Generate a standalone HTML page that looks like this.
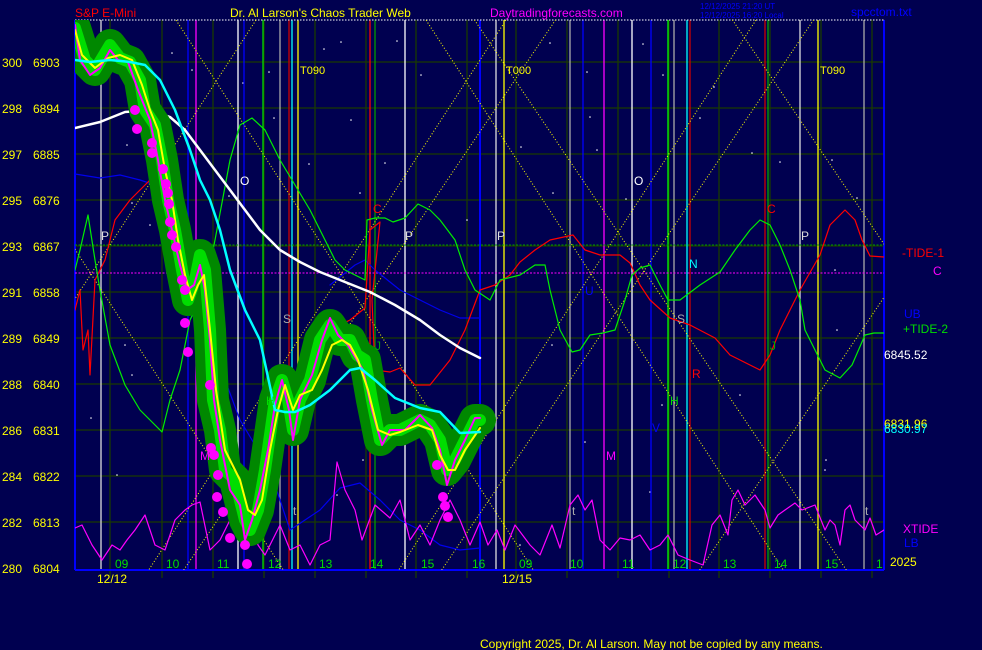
<!DOCTYPE html><html><head><style>body{margin:0;background:#000050;}svg{display:block;font-family:"Liberation Sans",sans-serif;}</style></head><body>
<svg width="982" height="650" viewBox="0 0 982 650" xmlns="http://www.w3.org/2000/svg">
<rect width="982" height="650" fill="#000050"/>
<defs><clipPath id="pa"><rect x="75" y="20" width="809" height="550"/></clipPath></defs>
<g stroke="#1a3a00" stroke-width="1.3" fill="none">
<path d="M75 62H884M75 108H884M75 154H884M75 200H884M75 246H884M75 292H884M75 338H884M75 384H884M75 430H884M75 476H884M75 522H884"/>
<path d="M110 20V578M162 20V578M213 20V578M264 20V578M315 20V578M366 20V578M416 20V578M467 20V578M516 20V578M567 20V578M618 20V578M669 20V578M719 20V578M770 20V578M821 20V578M872 20V578"/>
</g>
<g fill="#fff">
<circle cx="172" cy="53" r=".8"/><circle cx="192" cy="70" r=".8"/><circle cx="243" cy="83" r=".8"/><circle cx="269" cy="72" r=".8"/><circle cx="341" cy="42" r=".8"/><circle cx="324" cy="49" r=".8"/><circle cx="274" cy="118" r=".8"/><circle cx="351" cy="120" r=".8"/><circle cx="127" cy="145" r=".8"/><circle cx="309" cy="164" r=".8"/><circle cx="385" cy="163" r=".8"/><circle cx="229" cy="196" r=".8"/><circle cx="360" cy="193" r=".8"/><circle cx="132" cy="203" r=".8"/><circle cx="467" cy="220" r=".8"/><circle cx="150" cy="225" r=".8"/><circle cx="397" cy="41" r=".8"/><circle cx="421" cy="75" r=".8"/><circle cx="550" cy="43" r=".8"/><circle cx="587" cy="72" r=".8"/><circle cx="643" cy="44" r=".8"/><circle cx="663" cy="75" r=".8"/><circle cx="714" cy="87" r=".8"/><circle cx="590" cy="117" r=".8"/><circle cx="700" cy="118" r=".8"/><circle cx="521" cy="147" r=".8"/><circle cx="597" cy="150" r=".8"/><circle cx="752" cy="153" r=".8"/><circle cx="553" cy="193" r=".8"/><circle cx="626" cy="199" r=".8"/><circle cx="780" cy="162" r=".8"/><circle cx="832" cy="160" r=".8"/><circle cx="857" cy="198" r=".8"/><circle cx="835" cy="270" r=".8"/><circle cx="552" cy="345" r=".8"/><circle cx="585" cy="442" r=".8"/><circle cx="662" cy="405" r=".8"/><circle cx="740" cy="395" r=".8"/><circle cx="826" cy="460" r=".8"/><circle cx="837" cy="330" r=".8"/><circle cx="125" cy="345" r=".8"/><circle cx="132" cy="375" r=".8"/><circle cx="91" cy="418" r=".8"/><circle cx="117" cy="475" r=".8"/><circle cx="337" cy="495" r=".8"/><circle cx="363" cy="460" r=".8"/><circle cx="410" cy="430" r=".8"/><circle cx="650" cy="492" r=".8"/><circle cx="520" cy="545" r=".8"/><circle cx="825" cy="470" r=".8"/></g>
<g stroke-width="1.3" fill="none">
<path d="M101 20V570" stroke="#ddd"/><path d="M188 20V570" stroke="#0000ff"/><path d="M196 20V570" stroke="#ff00ff"/><path d="M238 20V570" stroke="#fff"/><path d="M244 20V570" stroke="#0000ff"/><path d="M263 20V570" stroke="#00dd00"/><path d="M280 20V570" stroke="#aaa"/><path d="M289 20V570" stroke="#c00"/><path d="M292 20V570" stroke="#00ffff"/><path d="M298 20V570" stroke="#ffff00"/><path d="M370 20V570" stroke="#ff0000"/><path d="M375 20V570" stroke="#009900"/><path d="M405 20V570" stroke="#fff"/>
<path d="M496 20V570" stroke="#ddd"/><path d="M504 20V570" stroke="#ffff00"/><path d="M570 20V570" stroke="#aaa"/><path d="M583 20V570" stroke="#0000ff"/><path d="M604 20V570" stroke="#ff00ff"/><path d="M632 20V570" stroke="#fff"/><path d="M651 20V570" stroke="#0000ff"/><path d="M668 20V570" stroke="#00ff00"/><path d="M674 20V570" stroke="#aaa"/><path d="M687 20V570" stroke="#00ffff"/><path d="M690 20V570" stroke="#c00"/><path d="M765 20V570" stroke="#c00"/><path d="M768 20V570" stroke="#00aa00"/><path d="M800 20V570" stroke="#ddd"/><path d="M818 20V570" stroke="#ffff00"/><path d="M864 20V570" stroke="#aaa"/>
</g>
<path d="M75 20V570M480 20V570M884 20V570" stroke="#0000ff" stroke-width="2"/>
<path d="M75 20H884" stroke="#fff" stroke-width="1" stroke-dasharray="1.5 1.5"/>
<path d="M75 570H884" stroke="#0000ff" stroke-width="2"/>
<path d="M75 245H884" stroke="#00a000" stroke-width="1" stroke-dasharray="2 1.5"/>
<path d="M75 273H884" stroke="#ff00ff" stroke-width="1" stroke-dasharray="2 1.5"/>
<g clip-path="url(#pa)" stroke="#ffff00" stroke-width="1" stroke-dasharray="1 2" fill="none">
<path d="M163 0L558 608M413 0L808 608M-87 0L308 608M269 0L-126 608M519 0L124 608M769 0L374 608"/>
<path d="M461 0L872 608M719 0L1130 608M977 0L1388 608M569 0L158 608M827 0L416 608M1085 0L674 608"/>
</g>
<g clip-path="url(#pa)" fill="none" stroke-linejoin="round" stroke-linecap="round">
<path d="M75 174L100 178L120 175L140 180L155 185L170 200L180 260L195 290L210 330L225 380L240 420L252 440L270 470L290 530L320 510L340 488L360 483L380 500L400 520L420 530L440 545L460 550L480 548" stroke="#0000ee" stroke-width="1.2"/>
<path d="M330 285L355 265L365 260L375 270L400 290L440 310L460 318L480 318" stroke="#0000ee" stroke-width="1.2"/>
<path d="M75 310L80 290L83 350L88 330L90 375L95 280L105 260L115 220L130 200L150 180L163 160L170 190L180 240L195 280L210 320L225 420L240 470L253 472L280 420L300 380L330 330L350 320L365 308L370 230L380 222L372 300L375 370L390 372L400 368L415 385L430 385L450 360L465 330L480 290L495 285L510 275L520 262L535 250L550 240L573 235L585 250L600 255L620 255L630 263L640 285L650 300L670 318L690 325L715 338L730 355L750 365L760 370L770 355L780 330L800 290L820 255L830 225L845 210L855 220L862 240L870 256L884 257" stroke="#ff0000" stroke-width="1.2"/>
<path d="M75 270L80 250L88 215L95 260L100 290L110 345L125 385L140 410L155 425L162 432L170 400L180 370L190 320L205 290L215 240L230 160L240 125L252 118L265 130L280 160L295 185L310 210L325 240L335 260L345 270L365 280L367 220L375 218L385 218L393 222L405 218L418 204L430 210L440 220L455 240L465 270L475 290L490 300L500 280L520 275L535 265L545 265L550 290L560 330L572 352L580 350L590 335L603 333L615 330L625 300L632 275L640 268L650 265L660 285L668 300L680 300L700 285L720 272L735 250L750 230L760 220L770 225L780 245L790 270L800 300L805 330L815 350L825 370L840 378L852 365L865 335L874 333L884 333" stroke="#00ee00" stroke-width="1.2"/>
<path d="M75 528L82 525L92 545L102 560L112 545L120 550L127 540L135 530L145 515L155 545L165 550L175 520L185 510L192 505L200 502L210 550L220 540L235 510L245 500L258 545L265 555L280 525L290 550L300 545L310 565L320 545L330 540L337 462L345 490L355 510L362 540L375 505L390 518L400 500L410 540L420 525L430 545L440 520L450 500L460 520L470 545L480 522L488 545L497 530L505 550L515 525L530 545L540 555L552 525L560 548L570 505L578 495L585 510L592 500L600 540L610 550L620 538L630 540L640 535L650 550L660 545L668 535L678 555L690 560L703 565L712 525L720 515L728 535L732 500L738 490L745 505L755 495L765 510L770 528L778 515L785 510L795 503L802 510L815 505L825 530L830 520L835 525L840 545L845 510L850 505L855 520L865 530L870 518L876 535L884 530" stroke="#ff00ff" stroke-width="1.2"/>
<path d="M75 128L100 122L125 112L150 110L170 117L185 130L200 150L215 170L230 190L245 210L260 230L280 250L300 262L320 272L345 282L370 292L395 305L420 320L440 335L460 348L480 358" stroke="#fff" stroke-width="2.5"/>
<path d="M75 28L85 60L95 70L110 45L120 58L130 62L140 80L145 110L155 125L162 160L168 200L175 230L182 270L188 300L195 280L200 255L205 270L210 330L213 400L220 430L225 470L235 480L245 520L250 530L258 510L265 470L275 400L282 380L288 400L293 430L300 400L310 380L320 340L330 325L340 340L350 340L357 355L365 360L372 400L380 440L390 430L400 430L410 425L420 420L430 425L440 440L447 470L455 460L465 440L475 420L480 420" stroke="#008800" stroke-width="32"/>
<path d="M75 28L85 60L95 70L110 45L120 58L130 62L140 80L145 110L155 125L162 160L168 200L175 230L182 270L188 300L195 280L200 255L205 270L210 330L213 400L220 430L225 470L235 480L245 520L250 530L258 510L265 470L275 400L282 380L288 400L293 430L300 400L310 380L320 340L330 325L340 340L350 340L357 355L365 360L372 400L380 440L390 430L400 430L410 425L420 420L430 425L440 440L447 470L455 460L465 440L475 420L480 420" stroke="#00dd00" stroke-width="12"/>
<path d="M75 25L80 60L90 75L100 68L110 50L118 60L128 62L138 90L142 100L150 120L158 160L165 200L172 230L180 265L187 290L194 285L200 265L205 290L210 340L214 400L220 440L230 490L240 505L245 540L252 520L260 490L268 450L275 405L282 380L289 410L293 440L300 400L312 375L322 340L330 318L338 335L348 345L357 360L363 370L372 410L382 445L390 430L405 430L420 415L432 428L440 450L447 485L455 460L465 440L475 418L480 418" stroke="#ff00ff" stroke-width="2"/>
<path d="M75 30L82 55L95 68L108 58L120 55L132 60L142 85L150 110L158 130L165 170L172 200L178 240L185 275L192 300L198 285L204 275L210 330L216 390L225 450L240 480L248 510L255 515L262 500L270 450L278 410L285 385L293 410L300 395L312 390L322 370L332 345L342 340L350 345L358 360L368 390L378 430L390 435L400 432L418 425L432 430L440 455L448 470L455 470L465 450L480 428" stroke="#ffff00" stroke-width="2"/>
<path d="M75 60L90 62L110 60L130 62L145 65L160 80L175 110L190 150L200 180L210 200L220 230L230 270L245 310L260 340L275 410L285 412L295 412L310 405L330 390L350 370L360 368L375 380L395 398L420 408L440 412L460 433L480 432" stroke="#00ffff" stroke-width="2.5"/>
</g>
<g fill="#ff00ff">
<circle cx="135" cy="110" r="5"/><circle cx="137" cy="129" r="5"/><circle cx="152" cy="143" r="5"/><circle cx="152" cy="153" r="5"/><circle cx="163" cy="169" r="5"/><circle cx="166" cy="184" r="5"/><circle cx="168" cy="193" r="5"/><circle cx="169" cy="204" r="5"/><circle cx="170" cy="222" r="5"/><circle cx="172" cy="235" r="5"/><circle cx="176" cy="247" r="5"/><circle cx="182" cy="280" r="5"/><circle cx="185" cy="290" r="5"/><circle cx="185" cy="323" r="5"/><circle cx="188" cy="352" r="5"/><circle cx="210" cy="385" r="5"/><circle cx="211" cy="448" r="5"/><circle cx="214" cy="455" r="5"/><circle cx="218" cy="475" r="5"/><circle cx="217" cy="497" r="5"/><circle cx="223" cy="512" r="5"/><circle cx="230" cy="538" r="5"/><circle cx="245" cy="545" r="5"/><circle cx="247" cy="564" r="5"/><circle cx="437" cy="465" r="5"/><circle cx="443" cy="497" r="5"/><circle cx="445" cy="506" r="5"/><circle cx="448" cy="517" r="5"/></g>
<g font-size="12" fill="#ffff00">
<text x="2" y="67">300</text><text x="33" y="67">6903</text><text x="2" y="113">298</text><text x="33" y="113">6894</text><text x="2" y="159">297</text><text x="33" y="159">6885</text><text x="2" y="205">295</text><text x="33" y="205">6876</text><text x="2" y="251">293</text><text x="33" y="251">6867</text><text x="2" y="297">291</text><text x="33" y="297">6858</text><text x="2" y="343">289</text><text x="33" y="343">6849</text><text x="2" y="389">288</text><text x="33" y="389">6840</text><text x="2" y="435">286</text><text x="33" y="435">6831</text><text x="2" y="481">284</text><text x="33" y="481">6822</text><text x="2" y="527">282</text><text x="33" y="527">6813</text><text x="2" y="573">280</text><text x="33" y="573">6804</text>
<text x="97" y="583">12/12</text><text x="502" y="583">12/15</text>
<text x="230" y="17">Dr. Al Larson's Chaos Trader Web</text>
<text x="480" y="648">Copyright 2025, Dr. Al Larson. May not be copied by any means.</text>
<text x="890" y="566">2025</text><text x="884" y="428">6831.96</text>
<text x="300" y="74" font-size="11">T090</text><text x="506" y="74" font-size="11">T000</text><text x="820" y="74" font-size="11">T090</text>
</g>
<g font-size="12" fill="#00dd00"><text x="115" y="568">09</text><text x="166" y="568">10</text><text x="217" y="568">11</text><text x="268" y="568">12</text><text x="319" y="568">13</text><text x="370" y="568">14</text><text x="421" y="568">15</text><text x="472" y="568">16</text><text x="519" y="568">09</text><text x="570" y="568">10</text><text x="622" y="568">11</text><text x="673" y="568">12</text><text x="723" y="568">13</text><text x="774" y="568">14</text><text x="825" y="568">15</text><text x="876" y="568">1</text>
<text x="903" y="333">+TIDE-2</text></g>
<text x="75" y="17" font-size="12" fill="#ff0000">S&amp;P E-Mini</text>
<text x="490" y="17" font-size="12" fill="#ff00ff">Daytradingforecasts.com</text>
<text x="700" y="9" font-size="8" fill="#0000ff">12/12/2025 21:20 UT</text>
<text x="700" y="18" font-size="8" fill="#0000ff">12/12/2025 16:20 Local</text>
<text x="851" y="16" font-size="12" fill="#0000ff">spcctom.txt</text>
<text x="902" y="257" font-size="12" fill="#ff0000">-TIDE-1</text>
<text x="933" y="275" font-size="12" fill="#ff00ff">C</text>
<text x="904" y="318" font-size="12" fill="#0000ff">UB</text>
<text x="884" y="359" font-size="12" fill="#fff">6845.52</text>
<text x="884" y="433" font-size="12" fill="#00ffff">6830.97</text>
<text x="903" y="533" font-size="12" fill="#ff00ff">XTIDE</text>
<text x="904" y="547" font-size="12" fill="#0000ff">LB</text>
<g font-size="12">
<text x="101" y="240" fill="#ddd">P</text><text x="405" y="240" fill="#ddd">P</text><text x="497" y="240" fill="#ddd">P</text><text x="801" y="240" fill="#ddd">P</text>
<text x="240" y="185" fill="#fff">O</text><text x="634" y="185" fill="#fff">O</text>
<text x="373" y="213" fill="#ff0000">C</text><text x="767" y="213" fill="#ff0000">C</text>
<text x="689" y="268" fill="#00ffff">N</text><text x="585" y="295" fill="#0000ff">U</text>
<text x="283" y="323" fill="#aaa">S</text><text x="677" y="323" fill="#aaa">S</text>
<text x="375" y="350" fill="#00aa00">J</text><text x="770" y="350" fill="#00aa00">J</text>
<text x="692" y="378" fill="#ff0000">R</text>
<text x="266" y="405" fill="#00dd00">H</text><text x="670" y="405" fill="#00dd00">H</text>
<text x="652" y="432" fill="#0000ff">V</text>
<text x="200" y="460" fill="#ff00ff">M</text><text x="606" y="460" fill="#ff00ff">M</text>
<text x="293" y="515" fill="#aaa">t</text><text x="572" y="515" fill="#aaa">t</text><text x="865" y="515" fill="#aaa">t</text>
</g>
</svg>
</body></html>
